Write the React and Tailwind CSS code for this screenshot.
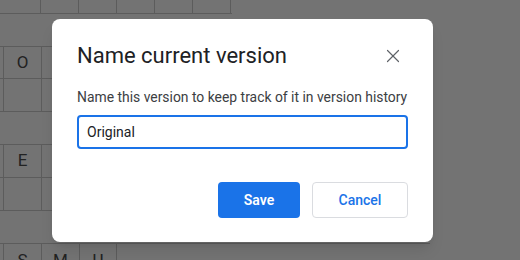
import React from 'react'
import { X } from 'lucide-react'

const Cell = ({ children, last }) => (
    <div className={`w-[38px] h-full border-l border-[#5c5c5c] flex items-center justify-center text-[17px] text-[#222] ${last ? 'border-r' : ''}`}>
        {children}
    </div>
)

const CellRow = ({ h, letters, count = 6 }) => (
    <div className={`${h} w-[430px] border-b border-[#5c5c5c] flex pl-[3px]`}>
        {Array.from({ length: count }).map((_, i) => (
            <Cell key={i}>{letters[i] || ''}</Cell>
        ))}
    </div>
)

const EmptyRow = () => <div className="h-[33px] w-[430px] border-b border-[#5c5c5c]" />

const App = () => {
    return (
        <div className="relative w-[520px] h-[260px] overflow-hidden bg-[#737373]" style={{ fontFamily: 'Roboto, "Noto Sans", sans-serif' }}>
            {/* sheet behind the scrim */}
            <div className="flex flex-col">
                <div className="h-[14px] w-[232px] border-b border-[#5c5c5c] flex pl-[3px]">
                    {Array.from({ length: 6 }).map((_, i) => (
                        <div key={i} className="w-[38px] h-full border-r border-[#5c5c5c]" />
                    ))}
                </div>
                <EmptyRow />
                <CellRow h="h-[32px]" letters={['O']} />
                <CellRow h="h-[33px]" letters={[]} />
                <EmptyRow />
                <CellRow h="h-[33px]" letters={['E']} />
                <CellRow h="h-[33px]" letters={[]} />
                <EmptyRow />
                <div className="h-[33px] flex pl-[3px]">
                    <Cell>S</Cell>
                    <Cell>M</Cell>
                    <Cell last>U</Cell>
                </div>
            </div>

            {/* dialog */}
            <div className="absolute left-[52px] top-[19px] w-[381px] h-[223px] bg-white rounded-lg shadow-lg px-[25px] pt-[23px]">
                <div className="flex items-center justify-between">
                    <h2 className="text-[22px] leading-[28px] text-[#202124]">Name current version</h2>
                    <button className="w-6 h-6 flex items-center justify-center text-[#5f6368] mr-[3px]">
                        <X className="w-[22px] h-[22px]" strokeWidth={1.3} />
                    </button>
                </div>
                <p className="mt-[17px] text-[13.9px] leading-[20px] text-[#3c4043] whitespace-nowrap">
                    Name this version to keep track of it in version history
                </p>
                <input
                    type="text"
                    defaultValue="Original"
                    className="mt-[8px] w-full h-[34px] border-2 border-[#1a73e8] rounded-[4px] px-[8px] text-[14px] text-[#202124] outline-none"
                />
                <div className="flex justify-end gap-3 mt-[33px]">
                    <button className="w-[82px] h-[36px] rounded-[4px] bg-[#1a73e8] text-white text-[14px] font-semibold">
                        Save
                    </button>
                    <button className="w-[96px] h-[36px] rounded-[4px] border border-[#dadce0] bg-white text-[#1a73e8] text-[14px] font-medium">
                        Cancel
                    </button>
                </div>
            </div>
        </div>
    )
}

export default App
